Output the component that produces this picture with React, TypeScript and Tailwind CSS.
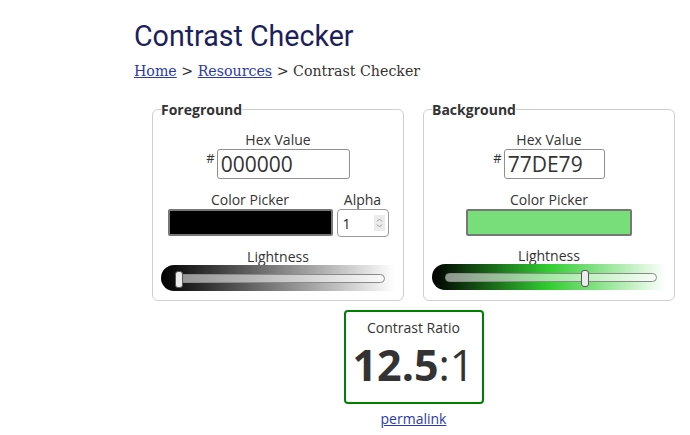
import React from "react";

const sans = "font-['Open_Sans',sans-serif]";

function Slider({ gradient, thumb, trackLeft, trackRight }: { gradient: string; thumb: number; trackLeft: number; trackRight: number }) {
  return (
    <div className="relative mx-[8px] h-[26px] rounded-l-full" style={{ background: gradient }}>
      <div
        className="absolute top-[9px] h-[9px] rounded-full border border-[#8a8a8a] bg-[rgba(255,255,255,0.55)]"
        style={{ left: trackLeft, right: trackRight }}
      />
      <div
        className="absolute top-[6px] h-[17px] w-[8px] rounded-[3px] border border-[#555] bg-[#ececec]"
        style={{ left: thumb }}
      />
    </div>
  );
}

function Label({ children }: { children: React.ReactNode }) {
  return <div className="text-[14px] leading-[19px] text-[#333]">{children}</div>;
}

function HexRow({ value, width }: { value: string; width: string }) {
  return (
    <div className="flex items-start">
      <span className="mt-[3px] mr-[2px] text-[13px] leading-[13px] text-[#333]">#</span>
      <div className={`${width} h-[30px] rounded-[3px] border border-[#8f8f8f] bg-white pl-[3px] text-[21px] leading-[28px] text-[#333]`}>
        {value}
      </div>
    </div>
  );
}

export default function App() {
  return (
    <div className={`min-h-[435px] bg-white ${sans}`}>
      <div className="ml-[134px] pt-[19px]">
        <h1 className="font-['Roboto',sans-serif] text-[28.6px] leading-[35px] text-[#1d1f5c]">Contrast Checker</h1>
        <div className="mt-[8px] font-['DejaVu_Serif',serif] text-[14.2px] leading-[18px] text-[#333]">
          <a className="text-[#2b3aa8] underline">Home</a> &gt; <a className="text-[#2b3aa8] underline">Resources</a> &gt; Contrast Checker
        </div>

        <div className="ml-[18px] mt-[20px] flex w-[523px] flex-col items-center">
          <div className="flex gap-[19px]">
            <fieldset className="w-[252px] rounded-[6px] border border-[#cfcfcf]">
              <legend className="ml-[8px] text-[14px] font-bold leading-[19px] text-[#333]">Foreground</legend>
              <div className="flex flex-col items-center pt-[11px] pb-[9px]">
                <Label>Hex Value</Label>
                <HexRow value="000000" width="w-[133px]" />
                <div className="mt-[11px] flex gap-[4px]">
                  <div className="flex flex-col items-center">
                    <Label>Color Picker</Label>
                    <div className="h-[27px] w-[165px] rounded-[2px] border-2 border-[#777] bg-black" />
                  </div>
                  <div className="flex w-[52px] flex-col items-center">
                    <Label>Alpha</Label>
                    <div className="flex h-[28px] w-[52px] items-center justify-between rounded-[4px] border border-[#999] bg-white pl-[5px] pr-[3px] text-[14px] text-[#222]">
                      <span>1</span>
                      <span className="flex h-[16px] w-[11px] flex-col items-center justify-center bg-[#ebebeb]">
                        <svg width="7" height="12" viewBox="0 0 7 12" fill="none" stroke="#9a9a9a" strokeWidth="1">
                          <path d="M1 4.5 L3.5 2 L6 4.5" />
                          <path d="M1 7.5 L3.5 10 L6 7.5" />
                        </svg>
                      </span>
                    </div>
                  </div>
                </div>
                <div className="mt-[10px]">
                  <Label>Lightness</Label>
                </div>
                <div className="-mt-[1px] self-stretch">
                  <Slider gradient="linear-gradient(to right, #000 0%, #808080 50%, #fff 100%)" thumb={14} trackLeft={14} trackRight={10} />
                </div>
              </div>
            </fieldset>

            <fieldset className="w-[252px] rounded-[6px] border border-[#cfcfcf]">
              <legend className="ml-[8px] text-[14px] font-bold leading-[19px] text-[#333]">Background</legend>
              <div className="flex flex-col items-center pt-[11px] pb-[9px]">
                <Label>Hex Value</Label>
                <HexRow value="77DE79" width="w-[101px]" />
                <div className="mt-[11px] flex flex-col items-center">
                  <Label>Color Picker</Label>
                  <div className="h-[27px] w-[166px] rounded-[2px] border-2 border-[#777] bg-[#77DE79]" />
                </div>
                <div className="mt-[10px]">
                  <Label>Lightness</Label>
                </div>
                <div className="-mt-[1px] self-stretch">
                  <Slider gradient="linear-gradient(to right, #000 0%, #32cd32 50%, #fff 100%)" thumb={149} trackLeft={13} trackRight={9} />
                </div>
              </div>
            </fieldset>
          </div>

          <div className="mt-[9px] flex h-[94px] w-[140px] flex-col items-center rounded-[4px] border-2 border-[#008000] pt-[6px]">
            <Label>Contrast Ratio</Label>
            <div className="mt-[5px] text-[43px] leading-[46px] text-[#333]">
              <span className="font-bold">12.5</span>:1
            </div>
          </div>
          <a className="mt-[5px] text-[14px] leading-[19px] text-[#2b3aa8] underline">permalink</a>
        </div>
      </div>
    </div>
  );
}
